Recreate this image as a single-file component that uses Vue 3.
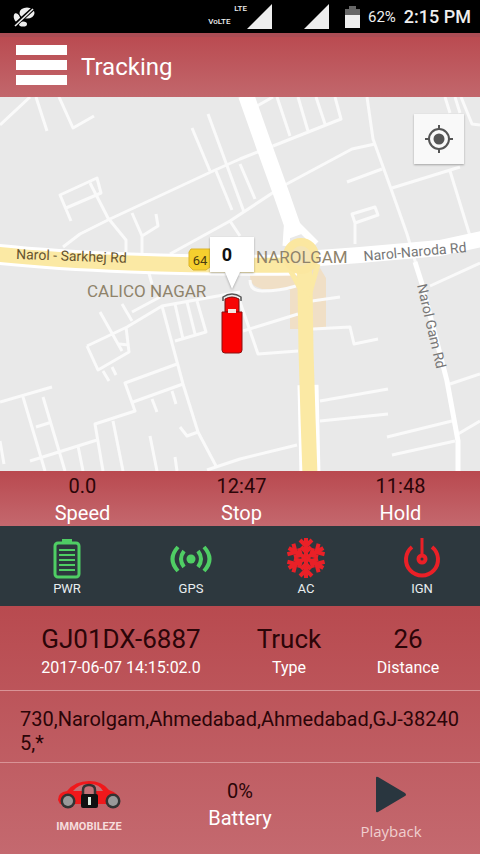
<template>
  <div class="screen">
    <div class="status-bar">
      <svg class="status-muted" viewBox="0 0 24 22" aria-hidden="true">
        <ellipse cx="15" cy="7" rx="7.5" ry="5.5" fill="#eee" />
        <ellipse cx="5" cy="12" rx="3" ry="5" transform="rotate(-20 5 12)" fill="#eee" />
        <ellipse cx="11" cy="18" rx="4" ry="2.6" fill="#eee" />
        <path d="M2 20L22 2" stroke="#000" stroke-width="4" />
        <path d="M3 20L21 3" stroke="#eee" stroke-width="1.6" />
      </svg>
      <div class="network">
        <span class="lte">LTE</span>
        <span class="volte">VoLTE</span>
      </div>
      <svg class="signal" viewBox="0 0 25 25" aria-hidden="true"><path d="M25 0V25H0z" fill="#eee" /></svg>
      <svg class="signal second" viewBox="0 0 25 25" aria-hidden="true"><path d="M25 0V25H0z" fill="#eee" /></svg>
      <svg class="battery" viewBox="0 0 15 22" aria-hidden="true">
        <path d="M4 0H11V3H15V9H0V3H4z" fill="#666" />
        <path d="M0 9H15V22H0z" fill="#eee" />
      </svg>
      <span class="percent">62%</span>
      <span class="clock">2:15 PM</span>
    </div>

    <header class="app-bar">
      <button class="menu" type="button" aria-label="Menu">
        <span></span>
        <span></span>
        <span></span>
      </button>
      <h1>Tracking</h1>
    </header>

    <main class="map">
      <svg class="map-canvas" viewBox="0 97 480 374" preserveAspectRatio="xMidYMid slice">
        <path class="zone" d="M250 268H320L326 278V329H290V290L262 289Q250 286 250 276z" />
        <path v-for="road in minorRoads" :key="road" class="minor" :d="road" />
        <path class="lane" d="M415 262L422 284L447 381L458 441V471" />
        <path class="avenue" d="M246 95L264 146L281 193L296 236" />
        <path class="avenue thin" d="M288 216L286 246M290 218L316 244" />
        <path class="avenue" d="M305 259L360 255L440 248L482 239" />
        <path class="casing" d="M-5 254Q50 260 130 263T300 265" />
        <path class="casing" d="M308 385L310 475" />
        <path class="highway" d="M-5 254Q50 260 130 263T300 265" />
        <path class="highway" d="M304 262L305 284L306 350L308 417L310 475" />
        <path class="ramp" d="M288 266L302 292M318 264L309 296" />
        <circle class="roundabout" cx="301" cy="256" r="14" />

        <text class="road-name dark" transform="translate(16 259) rotate(2)">Narol - Sarkhej Rd</text>
        <text class="road-name" transform="translate(364 261) rotate(-5)">Narol-Naroda Rd</text>
        <text class="road-name" transform="translate(417 285) rotate(77)">Narol Gam Rd</text>
        <text class="area" x="87" y="297">CALICO NAGAR</text>
        <text class="area" x="256" y="263">NAROLGAM</text>

        <path class="shield" d="M191 249H210V267L206 270H193L189 266V252z" />
        <text class="shield-text" x="200" y="265">64</text>

        <g class="truck">
          <path d="M223 301V297Q232 291 241 297V301" fill="none" stroke="#555" stroke-width="1.5" />
          <path d="M225 299Q232 295 239 299V312H225z" fill="#f60505" stroke="#711" />
          <path d="M222 312H242V350Q242 353 239 353H225Q222 353 222 350z" fill="#fb0000" stroke="#8c1010" />
          <path d="M228 309H236V313H228z" fill="#f5e6e0" />
        </g>
        <path class="bubble" d="M210 237H254V272H240L232 289L225 272H210z" />
        <text class="bubble-text" x="227" y="261">0</text>
      </svg>
      <button class="locate" type="button" aria-label="My location">
        <svg viewBox="0 0 28 28" fill="none" stroke="#555" stroke-width="2">
          <circle cx="14" cy="14" r="10" />
          <circle cx="14" cy="14" r="5.5" fill="#555" stroke="none" />
          <path d="M14 0V4M14 24V28M0 14H4M24 14H28" />
        </svg>
      </button>
    </main>

    <section class="stats">
      <div v-for="stat in stats" :key="stat.label" class="cell">
        <span class="value">{{ stat.value }}</span>
        <span class="label">{{ stat.label }}</span>
      </div>
    </section>

    <section class="sensors">
      <div class="sensor on">
        <svg viewBox="0 0 40 40" fill="none" stroke="currentColor" stroke-width="3">
          <path d="M15 0H25V4H15z" fill="currentColor" stroke="none" />
          <rect x="8" y="4" width="24" height="34" rx="3" />
          <path d="M12 11H28M12 16H28M12 21H28M12 26H28M12 31H28" stroke-width="2" />
        </svg>
        <span>PWR</span>
      </div>
      <div class="sensor on">
        <svg viewBox="0 0 40 40" fill="none" stroke="currentColor" stroke-width="4">
          <circle cx="20" cy="20" r="4.5" fill="currentColor" stroke="none" />
          <path d="M13 12Q7 20 13 28M27 12Q33 20 27 28M7 8Q-4 20 7 32M33 8Q44 20 33 32" />
        </svg>
        <span>GPS</span>
      </div>
      <div class="sensor off">
        <svg viewBox="0 0 40 40" fill="none" stroke="currentColor" stroke-width="4">
          <g v-for="angle in flakeAngles" :key="angle" :transform="`rotate(${angle} 20 19)`">
            <path d="M20 19V-1M14 1L20 7L26 1M15 8L20 13L25 8" />
          </g>
        </svg>
        <span>AC</span>
      </div>
      <div class="sensor off">
        <svg viewBox="0 0 40 40" fill="none" stroke="currentColor" stroke-width="4">
          <path d="M10 8A16 16 0 1 0 30 8" />
          <path d="M20 -1V16" stroke-width="3" />
          <circle cx="20" cy="20" r="3.5" />
        </svg>
        <span>IGN</span>
      </div>
    </section>

    <div class="panel">
      <section class="vehicle">
        <div v-for="item in vehicle" :key="item.value" class="cell">
          <span class="title">{{ item.value }}</span>
          <span class="caption">{{ item.label }}</span>
        </div>
      </section>

      <p class="address">730,Narolgam,Ahmedabad,Ahmedabad,GJ-382405,*</p>

      <section class="actions">
        <button class="immobilize" type="button">
          <svg viewBox="0 0 66 30" aria-hidden="true">
            <path d="M2 20Q2 12 11 11Q19 1 33 1Q46 1 53 10Q64 13 63 22L60 24H4z" fill="#f0181b" />
            <path d="M17 11Q23 4 31 4V11zM35 4Q43 4 47 11H35z" fill="#c27277" />
            <circle cx="12" cy="21" r="7.5" fill="#333" />
            <circle cx="12" cy="21" r="5" fill="#999" />
            <circle cx="57" cy="21" r="7.5" fill="#333" />
            <circle cx="57" cy="21" r="5" fill="#999" />
            <path d="M27 15V10Q27 5 33 5T39 10V15" fill="#c27277" stroke="#333" stroke-width="2.5" />
            <rect x="25" y="14" width="17" height="14" rx="2" fill="#111" />
            <path d="M32 17H35V25H32z" fill="#ddeee0" />
          </svg>
          <span>IMMOBILEZE</span>
        </button>
        <div class="cell charge">
          <span class="value">0%</span>
          <span class="label">Battery</span>
        </div>
        <button class="playback" type="button">
          <svg viewBox="0 0 32 38" aria-hidden="true"><path d="M1 2Q1 0 3 1L30 17Q32 19 30 20L3 36Q1 37 1 35z" fill="#29363f" /></svg>
          <span>Playback</span>
        </button>
      </section>
    </div>
  </div>
</template>

<script setup>
const stats = [
  { value: '0.0', label: 'Speed' },
  { value: '12:47', label: 'Stop' },
  { value: '11:48', label: 'Hold' }
]

const vehicle = [
  { value: 'GJ01DX-6887', label: '2017-06-07 14:15:02.0' },
  { value: 'Truck', label: 'Type' },
  { value: '26', label: 'Distance' }
]

const flakeAngles = [0, 60, 120, 180, 240, 300]

const minorRoads = [
  // north west
  'M30 97L0 125M36 97L47 131M59 97L73 128L94 116',
  'M192 128L210 171M216 171L232 210M208 114L244 212',
  'M273 146L240 159L213 171L110 219L80 234L63 247',
  'M71 221L60 195L97 178L101 193L66 208M90 183L108 218L126 240V256',
  'M132 213L142 236V260M142 236L158 226L156 214',
  'M170 254L230 221L283 186L352 149L375 144M230 221L240 236M148 270L152 284',
  // north east
  'M257 106L273 97M277 97L290 136M298 97L308 131M316 97L325 124M335 97L341 119L273 146',
  'M367 97L373 139L390 186L407 234L422 284M382 169L347 182',
  'M392 188L460 167M450 171L470 236M352 214L375 207L378 215L355 223zM355 221V244',
  'M445 97L450 113M455 97L460 113M461 97L472 124L480 125M240 164L255 199M430 286L480 263',
  // south west
  'M0 402L52 387M23 397L45 471M43 397L65 471M36 427L52 422M30 461L97 440M78 446L83 471',
  'M103 471L95 424L135 411L125 383L177 364M113 421L123 471M133 402L183 384',
  'M152 399L157 412M172 391L176 404M162 306L183 384L198 432L216 466M198 432L187 436L180 427',
  'M207 470L240 459L297 445M150 436L157 471M175 457L177 471M0 441L4 464',
  'M87 346L127 327L162 306L240 292M87 346L98 370L129 352L126 327M100 312L122 351',
  'M119 344L129 345M122 304L132 321M132 312L160 297M103 371L109 381M112 367L116 375',
  'M175 341L206 332L197 301M175 304L183 339M187 302L195 334',
  // south east
  'M250 280Q250 291 262 291Q280 291 296 286M312 301L340 297M243 331L298 314',
  'M238 296L258 354L298 351M313 329L350 327L354 344L378 339',
  'M320 401L388 389M320 421L388 414M450 384L480 374M458 434L480 421M387 437L452 421M392 455L455 441'
]
</script>

<style>
body {
  margin: 0;
  background: #c4696f;
}
</style>

<style scoped>
.screen {
  display: flex;
  flex-direction: column;
  min-height: 100vh;
  font-family: Roboto, "Liberation Sans", sans-serif;
  color: #fff;
}

button {
  padding: 0;
  border: 0;
  background: none;
  color: inherit;
  font-family: inherit;
  cursor: pointer;
}

svg {
  display: block;
}

.status-bar {
  display: flex;
  align-items: center;
  height: 33px;
  padding: 0 9px 0 12px;
  background: #000;
  color: #eee;
}

.status-muted {
  width: 24px;
  height: 22px;
  margin-right: auto;
}

.network {
  display: flex;
  flex-direction: column;
  font-size: 8px;
  line-height: 13px;
  font-weight: 500;
}

.lte {
  padding-left: 26px;
}

.volte {
  margin-bottom: 3px;
}

.signal {
  width: 25px;
  height: 25px;
}

.signal.second {
  margin: 0 16px 0 32px;
}

.battery {
  width: 15px;
  height: 22px;
}

.percent {
  margin: 0 8px;
  font-size: 15px;
}

.clock {
  font-size: 18px;
  font-weight: 500;
}

.app-bar {
  display: flex;
  align-items: center;
  gap: 14px;
  height: 64px;
  padding: 0 16px;
  box-sizing: border-box;
  border-top: 4px solid #ab4c54;
  background: linear-gradient(#ba4b51, #c2676c);
}

.app-bar h1 {
  margin: 0;
  font-size: 24px;
  line-height: 32px;
  font-weight: 400;
}

.menu {
  display: flex;
  flex-direction: column;
  gap: 5px;
  width: 51px;
  padding-bottom: 4px;
}

.menu span {
  height: 10px;
  background: #fff;
}

.map {
  position: relative;
  flex: 1;
  min-height: 260px;
  background: #e9e9e9;
  overflow: hidden;
}

.map-canvas {
  position: absolute;
  inset: 0;
  width: 100%;
  height: 100%;
}

.map-canvas path {
  stroke-linejoin: round;
}

.zone {
  fill: #f0dfc6;
}

.minor {
  fill: none;
  stroke: #fafafa;
  stroke-width: 3;
}

.lane {
  fill: none;
  stroke: #fff;
  stroke-width: 5;
}

.avenue {
  fill: none;
  stroke: #fff;
  stroke-width: 16;
}

.avenue.thin {
  stroke-width: 7;
}

.casing {
  fill: none;
  stroke: #fff;
  stroke-width: 21;
}

.highway {
  fill: none;
  stroke: #fbe9a4;
  stroke-width: 15;
}

.ramp {
  fill: none;
  stroke: #fbe9a4;
  stroke-width: 5;
}

.roundabout {
  fill: #f5e5b4;
  stroke: #fbe7a0;
  stroke-width: 8;
}

.road-name {
  font-size: 14px;
  fill: #777;
}

.road-name.dark {
  fill: #66532f;
}

.area {
  font-size: 17px;
  fill: #8f836b;
}

.shield {
  fill: #f6cf2e;
  stroke: #dcb52a;
}

.shield-text {
  font-size: 13px;
  text-anchor: middle;
  fill: #4a3c10;
}

.bubble {
  fill: #fff;
  filter: drop-shadow(0 1px 1px rgba(0, 0, 0, 0.3));
}

.bubble-text {
  font-size: 18px;
  font-weight: 700;
  text-anchor: middle;
  fill: #111;
}

.locate {
  position: absolute;
  top: 17px;
  right: 16px;
  display: grid;
  place-items: center;
  width: 50px;
  height: 50px;
  background: #f9f9f9;
  box-shadow: 0 1px 2px rgba(0, 0, 0, 0.3);
}

.locate svg {
  width: 28px;
  height: 28px;
}

.cell {
  display: flex;
  flex-direction: column;
  align-items: center;
}

.stats {
  display: grid;
  grid-template-columns: repeat(3, 1fr);
  padding: 2px 0 0 3px;
  height: 53px;
  background: linear-gradient(#b9494f, #c4686e);
}

.value {
  font-size: 20px;
  line-height: 27px;
  color: #2b0508;
}

.label {
  font-size: 20px;
  line-height: 27px;
}

.sensors {
  display: grid;
  grid-template-columns: 134fr 114fr 116fr 116fr;
  padding: 13px 0 8px;
  background: #2d383e;
}

.sensor {
  display: flex;
  flex-direction: column;
  align-items: center;
}

.sensor svg {
  width: 40px;
  height: 40px;
  overflow: visible;
}

.sensor span {
  font-size: 13px;
  line-height: 19px;
  color: #e8eef0;
}

.sensor.on {
  color: #4fce64;
}

.sensor.off {
  color: #ea2027;
}

.panel {
  background: linear-gradient(#b84a4f, #c4696f);
}

.vehicle {
  display: grid;
  grid-template-columns: 242fr 94fr 144fr;
  padding: 16px 0 10px;
  border-bottom: 1px solid #d99396;
}

.title {
  font-size: 26px;
  line-height: 34px;
  color: #2b0508;
}

.caption {
  font-size: 16px;
  line-height: 24px;
}

.address {
  margin: 0;
  padding: 16px 20px 7px;
  border-bottom: 1px solid #d99396;
  font-size: 20px;
  line-height: 24px;
  color: #2b0508;
  word-break: break-all;
}

.actions {
  display: grid;
  grid-template-columns: 178fr 124fr 178fr;
  height: 91px;
}

.charge {
  padding-top: 15px;
}

.immobilize,
.playback {
  display: flex;
  flex-direction: column;
  align-items: center;
}

.immobilize {
  gap: 10px;
  padding-top: 17px;
  font-size: 11px;
  line-height: 13px;
  font-weight: 700;
  color: #f6dcdc;
}

.immobilize svg {
  width: 66px;
  height: 30px;
}

.playback {
  gap: 7px;
  padding-top: 13px;
  font-family: "Open Sans", "Noto Sans", sans-serif;
  font-size: 15px;
  line-height: 20px;
  color: #f0cfcf;
}

.playback svg {
  width: 32px;
  height: 38px;
}
</style>
